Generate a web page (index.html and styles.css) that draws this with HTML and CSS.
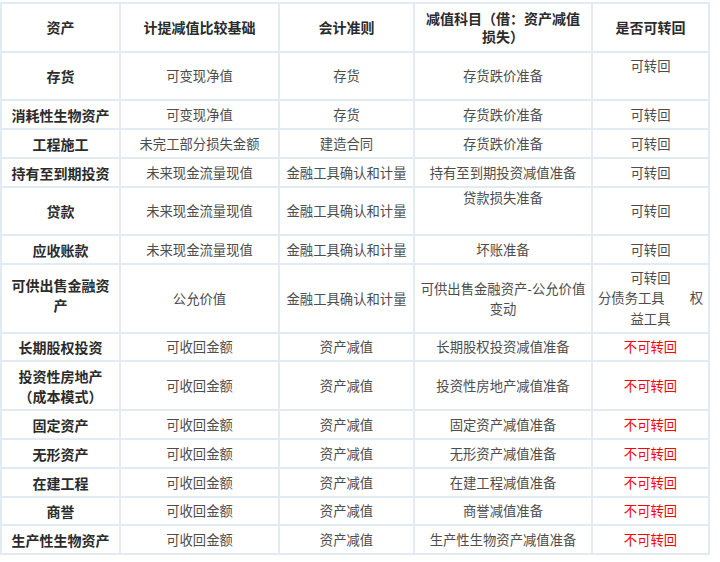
FILE: index.html
```html
<!DOCTYPE html>
<html lang="zh-CN">
<head>
<meta charset="utf-8">
<title>资产减值</title>
<link rel="stylesheet" href="styles.css">
</head>
<body>
<div class="wrap">
<table class="grid">
  <colgroup>
    <col class="c1"><col class="c2"><col class="c3"><col class="c4"><col class="c5">
  </colgroup>
  <thead>
    <tr class="h49">
      <th>资产</th>
      <th>计提减值比较基础</th>
      <th>会计准则</th>
      <th>减值科目（借：资产减值损失）</th>
      <th>是否可转回</th>
    </tr>
  </thead>
  <tbody>
    <tr class="h48">
      <th>存货</th><td>可变现净值</td><td>存货</td><td>存货跌价准备</td><td class="up10">可转回</td>
    </tr>
    <tr class="h29">
      <th>消耗性生物资产</th><td>可变现净值</td><td>存货</td><td>存货跌价准备</td><td>可转回</td>
    </tr>
    <tr class="h29">
      <th>工程施工</th><td>未完工部分损失金额</td><td>建造合同</td><td>存货跌价准备</td><td>可转回</td>
    </tr>
    <tr class="h29">
      <th>持有至到期投资</th><td>未来现金流量现值</td><td>金融工具确认和计量</td><td>持有至到期投资减值准备</td><td>可转回</td>
    </tr>
    <tr class="h48">
      <th>贷款</th><td>未来现金流量现值</td><td>金融工具确认和计量</td><td class="up14">贷款损失准备</td><td>可转回</td>
    </tr>
    <tr class="h29">
      <th>应收账款</th><td>未来现金流量现值</td><td>金融工具确认和计量</td><td>坏账准备</td><td>可转回</td>
    </tr>
    <tr class="h69">
      <th class="up6">可供出售金融资产</th><td>公允价值</td><td>金融工具确认和计量</td><td>可供出售金融资产-公允价值变动</td>
      <td>
        <div class="multi">
          <div class="ln">可转回</div>
          <div class="ln split"><span>分债务工具</span><span>权</span></div>
          <div class="ln">益工具</div>
        </div>
      </td>
    </tr>
    <tr class="h28">
      <th>长期股权投资</th><td>可收回金额</td><td>资产减值</td><td>长期股权投资减值准备</td><td class="no">不可转回</td>
    </tr>
    <tr class="h49">
      <th>投资性房地产（成本模式）</th><td>可收回金额</td><td>资产减值</td><td>投资性房地产减值准备</td><td class="no">不可转回</td>
    </tr>
    <tr class="h29">
      <th>固定资产</th><td>可收回金额</td><td>资产减值</td><td>固定资产减值准备</td><td class="no">不可转回</td>
    </tr>
    <tr class="h29">
      <th>无形资产</th><td>可收回金额</td><td>资产减值</td><td>无形资产减值准备</td><td class="no">不可转回</td>
    </tr>
    <tr class="h29">
      <th>在建工程</th><td>可收回金额</td><td>资产减值</td><td>在建工程减值准备</td><td class="no">不可转回</td>
    </tr>
    <tr class="h28">
      <th>商誉</th><td>可收回金额</td><td>资产减值</td><td>商誉减值准备</td><td class="no">不可转回</td>
    </tr>
    <tr class="h29">
      <th>生产性生物资产</th><td>可收回金额</td><td>资产减值</td><td>生产性生物资产减值准备</td><td class="no">不可转回</td>
    </tr>
  </tbody>
</table>
</div>
</body>
</html>
```

FILE: styles.css
```css
html, body {
  margin: 0;
  padding: 0;
  background: #ffffff;
}

.wrap {
  padding: 2px 0 0 0;
}

.grid {
  table-layout: fixed;
  width: 710px;
  border-collapse: separate;
  border-spacing: 0;
  border: 1px solid #e2eaf3;
  font-family: "Noto Sans CJK SC", "Microsoft YaHei", sans-serif;
}

.c1 { width: 119px; }
.c2 { width: 159px; }
.c3 { width: 135px; }
.c4 { width: 178px; }
.c5 { width: 117px; }

.grid th,
.grid td {
  border: 1px solid #e2eaf3;
  padding: 0 5px;
  text-align: center;
  vertical-align: middle;
  overflow: hidden;
}

.grid td {
  font-size: 13.33px;
  line-height: 20px;
  font-weight: normal;
  color: #4d4d4d;
}

.grid th {
  font-size: 14px;
  line-height: 20px;
  font-weight: bold;
  color: #2b2b2b;
}

.grid thead th {
  line-height: 18px;
  padding-bottom: 2px;
}

.h28 { height: 28px; }
.h29 { height: 29px; }
.h48 { height: 48px; }
.h49 { height: 49px; }
.h69 { height: 69px; }

.grid .up10 { padding-bottom: 20px; }
.grid .up14 { padding-bottom: 26px; }
.grid .up6 { padding-bottom: 8px; }

.grid .no {
  color: #ff0000;
}

.multi {
  display: flex;
  flex-direction: column;
}

.ln {
  line-height: 20.5px;
}

.split {
  display: flex;
  justify-content: space-between;
}
```
